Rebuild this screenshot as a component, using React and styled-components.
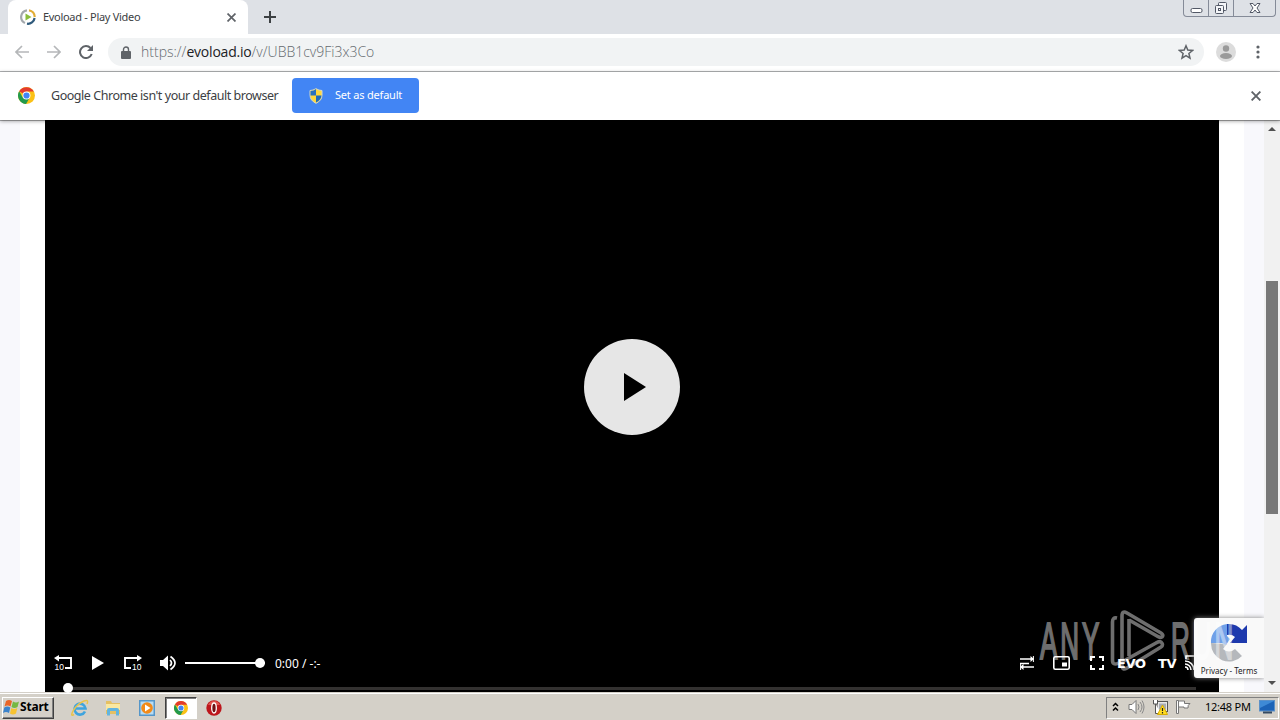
import styled, { createGlobalStyle } from "styled-components";

export default function App() {
  return (
    <Desktop>
      <GlobalStyle />
      <TabStrip>
        <Tab>
          <Favicon />
          <TabTitle>Evoload - Play Video</TabTitle>
          <CrossIcon size={9} />
        </Tab>
        <NewTab>
          <svg width="12" height="12" viewBox="0 0 12 12">
            <path d="M6 0v12M0 6h12" stroke="#3c4043" strokeWidth="2" />
          </svg>
        </NewTab>
        <WindowButtons>
          <WindowButton $width={24}>
            <svg width="13" height="16" viewBox="0 0 13 16">
              <rect x="1" y="8.5" width="11" height="4" rx="1.5" fill="#fff" stroke="#525866" />
            </svg>
          </WindowButton>
          <WindowButton $width={25}>
            <svg width="14" height="16" viewBox="0 0 14 16">
              <rect x="4.5" y="2.5" width="8" height="8" rx="1" fill="#f4f5f8" stroke="#525866" />
              <rect x="1.5" y="5.5" width="8" height="8" rx="1" fill="#f4f5f8" stroke="#525866" />
              <rect x="4.5" y="8.5" width="2" height="2" fill="#fff" stroke="#525866" />
            </svg>
          </WindowButton>
          <WindowButton $width={42}>
            <svg width="12" height="16" viewBox="0 0 12 16">
              <path
                d="M1 3.5h3l2 2.5 2-2.5h3L8 8l3 4.5H8L6 10l-2 2.500H1L4 8z"
                fill="#fff"
                stroke="#525866"
              />
            </svg>
          </WindowButton>
        </WindowButtons>
      </TabStrip>

      <Toolbar>
        <NavButtons>
          <ArrowIcon />
          <ArrowIcon forward />
          <ReloadIcon />
        </NavButtons>
        <AddressBar>
          <svg width="10" height="13" viewBox="0 0 10 13">
            <path d="M2.5 6V3.5a2.5 2.5 0 0 1 5 0V6" fill="none" stroke="#5f6368" strokeWidth="1.4" />
            <rect y="5" width="10" height="8" rx="1" fill="#5f6368" />
          </svg>
          <Url>
            https://<Host>evoload.io</Host>/v/UBB1cv9Fi3x3Co
          </Url>
          <svg width="16" height="16" viewBox="0 0 16 16">
            <path
              d="M8 1.8l1.800 4.300 4.700.4-3.600 3 1.100 4.600L8 11.700l-4 2.400 1.100-4.600-3.600-3 4.700-.4z"
              fill="none"
              stroke="#5f6368"
              strokeWidth="1.5"
            />
          </svg>
        </AddressBar>
        <Avatar>
          <svg width="20" height="20" viewBox="0 0 20 20">
            <circle cx="10" cy="10" r="10" fill="#dcdcdc" />
            <circle cx="10" cy="6.5" r="3.2" fill="#9a9a9a" />
            <ellipse cx="10" cy="14" rx="6" ry="3" fill="#9a9a9a" />
          </svg>
        </Avatar>
        <svg width="4" height="14" viewBox="0 0 4 14" fill="#5f6368">
          <circle cx="2" cy="2" r="1.6" />
          <circle cx="2" cy="7" r="1.6" />
          <circle cx="2" cy="12" r="1.6" />
        </svg>
      </Toolbar>

      <InfoBar>
        <ChromeIcon size={17} />
        <InfoText>Google Chrome isn't your default browser</InfoText>
        <DefaultButton>
          <ShieldIcon />
          <span>Set as default</span>
        </DefaultButton>
        <InfoClose>
          <CrossIcon size={10} />
        </InfoClose>
      </InfoBar>

      <Page>
        <PageBody>
          <Card>
            <Video>
              <Stage>
                <BigPlay>
                  <svg width="22" height="28" viewBox="0 0 22 28">
                    <path d="M0 0l22 14L0 28z" />
                  </svg>
                </BigPlay>
              </Stage>
              <Controls>
                <SkipIcon />
                <PlayIcon />
                <SkipIcon forward />
                <VolumeIcon />
                <VolumeTrack>
                  <VolumeKnob />
                </VolumeTrack>
                <Time>0:00 / -:-</Time>
                <RightControls>
                  <SwapIcon />
                  <svg width="17" height="14" viewBox="0 0 17 14">
                    <rect x=".8" y=".8" width="15.4" height="12.4" rx="1.5" fill="none" stroke="#fff" strokeWidth="1.6" />
                    <rect x="9" y="6.5" width="5" height="4" fill="#fff" />
                  </svg>
                  <svg width="14" height="14" viewBox="0 0 14 14">
                    <path d="M1 5V1h4M9 1h4v4M13 9v4H9M5 13H1V9" fill="none" stroke="#fff" strokeWidth="2" />
                  </svg>
                  <ControlLabel $width={41}>EVO</ControlLabel>
                  <ControlLabel $width={27}>TV</ControlLabel>
                  <svg width="17" height="16" viewBox="0 0 17 16" fill="none" stroke="#fff" strokeWidth="1.6">
                    <path d="M1 4V1h15v13h-5M0 6a9 9 0 0 1 9 9M0 9a6 6 0 0 1 6 6M0 12a3 3 0 0 1 3 3" />
                  </svg>
                </RightControls>
              </Controls>
              <Progress>
                <ProgressKnob />
              </Progress>
            </Video>
          </Card>
        </PageBody>
        <ScrollBar>
          <ScrollArrow />
          <Thumb />
          <ScrollArrow $down />
        </ScrollBar>
        <Recaptcha>
          <RecaptchaLogo />
          <span>Privacy - Terms</span>
        </Recaptcha>
      </Page>

      <Watermark>
        <WatermarkWord $width={70}>ANY</WatermarkWord>
        <svg width="61" height="64" viewBox="0 0 61 64" fill="none" stroke="#fff" strokeWidth="3.6" strokeLinejoin="round">
          <path d="M7 9Q2.500 8 2.500 13v38q0 6 6 3" />
          <path d="M12 50V7q0-6 5-3l34 20q3 2 1 4-2 1-5-1L19 11" />
          <path d="M19 10v37M12 49v7q0 6 5 3l34-21q3-2 0-5-2-1-5 1L10 54" />
        </svg>
        <WatermarkWord $width={62}>RUN</WatermarkWord>
      </Watermark>

      <Taskbar>
        <StartButton>
          <WindowsFlag />
          Start
        </StartButton>
        <QuickLaunch>
          <ExplorerIcon />
          <FolderIcon />
          <MediaIcon />
          <ActiveTask>
            <ChromeIcon size={14} />
          </ActiveTask>
          <OperaIcon />
        </QuickLaunch>
        <Tray>
          <svg width="7" height="10" viewBox="0 0 7 10" fill="none" stroke="#000" strokeWidth="1.5">
            <path d="M1 4l2.500-2.500L6 4M1 8.500L3.500 6 6 8.500" />
          </svg>
          <svg width="17" height="16" viewBox="0 0 17 16">
            <path d="M1 5.500h3l4-4v13l-4-4H1z" fill="#fff" stroke="#777" />
            <path d="M10 5q2 3 0 6M12 3q4 5 0 10M14 1.500q4 6.500 0 13" fill="none" stroke="#888" />
          </svg>
          <svg width="16" height="16" viewBox="0 0 16 16">
            <rect x="5" y="2.5" width="10.5" height="10" fill="#e8e8e8" stroke="#555" />
            <rect x="7" y="4.5" width="7" height="6" fill="#a8acb4" />
            <path d="M1.500 1v4h4V1M3.500 5v9.500H9" fill="#fff" stroke="#555" />
            <path d="M10.500 6l5 9.500h-10z" fill="#ffdc22" stroke="#d8ac00" />
            <path d="M10.500 9v3M10.500 13v1.500" stroke="#222" strokeWidth="1.2" />
          </svg>
          <svg width="16" height="16" viewBox="0 0 16 16">
            <path d="M1.500 1.500h2v13h-2z" fill="#fff" stroke="#777" />
            <path d="M3.500 2h6v2.500H15Q12.500 6 13 9H9V8H3.500z" fill="#fff" stroke="#777" />
          </svg>
          <Clock>12:48 PM</Clock>
          <svg width="16" height="14" viewBox="0 0 16 14">
            <rect x=".5" y=".5" width="15" height="10.5" fill="#1c63b7" stroke="#5c91c8" />
            <path d="M1 1h14L1 8z" fill="#3e8ad6" />
            <path d="M4 12.500h9" stroke="#354a62" strokeWidth="2" />
          </svg>
        </Tray>
      </Taskbar>
    </Desktop>
  );
}

function Favicon() {
  return (
    <svg width="16" height="16" viewBox="0 0 16 16" fill="none" strokeWidth="2.2">
      <path d="M5 14A6.700 6.700 0 0 1 7 1.300" stroke="#a4a9ad" />
      <path d="M9 1.300A6.700 6.700 0 0 1 14.700 8" stroke="#e1ad35" />
      <path d="M14.600 9A6.700 6.700 0 0 1 7 14.700" stroke="#305b7c" />
      <path d="M5.500 4.500l6 3.500-6 3.500z" fill="#8bbd3c" />
    </svg>
  );
}

function CrossIcon({ size }) {
  return (
    <svg width={size} height={size} viewBox="0 0 10 10">
      <path d="M.6.6l8.800 8.800M9.400.6L.6 9.400" stroke="#5f6368" strokeWidth="1.9" />
    </svg>
  );
}

function ReloadIcon() {
  return (
    <svg width="14" height="14" viewBox="0 0 14 14">
      <path d="M11.500 3A6 6 0 1 0 12.700 9" fill="none" stroke="#5f6368" strokeWidth="2" />
      <path d="M14 0v6H8z" fill="#5f6368" />
    </svg>
  );
}

function ArrowIcon({ forward }) {
  return (
    <svg width="14" height="14" viewBox="0 0 14 14">
      <path
        d={forward ? "M0 7h13M7 1l6 6-6 6" : "M14 7H1M7 1L1 7l6 6"}
        fill="none"
        stroke="#b5b7b9"
        strokeWidth="1.7"
      />
    </svg>
  );
}

function ChromeIcon({ size }) {
  return (
    <svg width={size} height={size} viewBox="0 0 18 18">
      <circle cx="9" cy="9" r="9" fill="#fbc116" />
      <path d="M9 9L1.200 4.500A9 9 0 0 1 16.800 4.800H9z" fill="#e33b2e" />
      <path d="M1.200 4.500A9 9 0 0 0 8.500 18l4-7L9 9 5 11z" fill="#229a4c" />
      <circle cx="9" cy="9" r="4.2" fill="#fff" />
      <circle cx="9" cy="9" r="3.3" fill="#4285f4" />
    </svg>
  );
}

function ShieldIcon() {
  return (
    <svg width="14" height="16" viewBox="0 0 14 16">
      <path d="M7 .7Q4 2.500 1 2.500V7q0 5.500 6 8.300 6-2.800 6-8.300V2.500Q10 2.500 7 .7z" fill="#ffd83c" stroke="#d4d9c7" />
      <path d="M7 1v6.500H1.500V3Q5 2.800 7 1z" fill="#2a72be" />
      <path d="M7 7.500h5.500q-.5 4.500-5.500 7z" fill="#216bb8" />
    </svg>
  );
}

function SkipIcon({ forward }) {
  return (
    <svg width="18" height="16" viewBox="0 0 18 16">
      <path
        d={forward ? "M7 13H1V3h14" : "M11 13h6V3H3"}
        fill="none"
        stroke="#fff"
        strokeWidth="1.9"
      />
      <path d={forward ? "M13 0l5 3-5 3.500z" : "M5 0L0 3l5 3.500z"} fill="#fff" />
      <IconNumber x={forward ? 8 : 0.5} y="15">
        10
      </IconNumber>
    </svg>
  );
}

function PlayIcon() {
  return (
    <svg width="12" height="14" viewBox="0 0 12 14">
      <path d="M0 0l12 7-12 7z" fill="#fff" />
    </svg>
  );
}

function VolumeIcon() {
  return (
    <svg width="17" height="16" viewBox="0 0 17 16">
      <path d="M0 5h3l5-4.500v15L3 11H0z" fill="#fff" />
      <path d="M10 5q3 3 0 6M10.500 1.500q9 6.500 0 13" fill="none" stroke="#fff" strokeWidth="1.7" />
    </svg>
  );
}

function SwapIcon() {
  return (
    <svg width="14" height="14" viewBox="0 0 14 14">
      <path d="M0 3h12M2 11h12M0 7.500h9" fill="none" stroke="#fff" strokeWidth="1.4" />
      <path d="M10.500 0L14 3l-3.500 3zM3.500 8L0 11l3.500 3z" fill="#fff" />
      <path d="M.6 7v7M13.400 0v6" stroke="#fff" />
    </svg>
  );
}

function RecaptchaLogo() {
  return (
    <svg width="38" height="40" viewBox="0 0 38 40">
      <path d="M1 20A18 18 0 0 0 32 33l-7-7q-6 5-12 0l4-5z" fill="#b5b8bc" />
      <path d="M1 20A18 18 0 0 1 17 1v12l3 3-4 6-4-2z" fill="#6fa0e8" />
      <path d="M17 1q9-1 15 6l5-5v18H20l5-6q-3-3-8-2z" fill="#1d39ad" />
    </svg>
  );
}

function WindowsFlag() {
  return (
    <svg width="17" height="16" viewBox="0 0 17 16">
      <path d="M3 2q3-2 6 0L7.500 7.500q-3-2-6 0z" fill="#e96527" />
      <path d="M10 2.500q3 2 6 0L14.500 8q-3 2-6 0z" fill="#75b843" />
      <path d="M1.300 8.500q3-2 6 0L6 14q-3-2-6 0z" fill="#3b83cc" />
      <path d="M8.300 9q3 2 6 0L13 14.500q-3 2-6 0z" fill="#f7c331" />
    </svg>
  );
}

function ExplorerIcon() {
  return (
    <svg width="18" height="18" viewBox="0 0 18 18" fill="none">
      <path d="M14 12.500A5.500 5.500 0 1 1 14.500 9.500H5" stroke="#3fa4de" strokeWidth="2.6" />
      <path d="M3 15.500Q-1 18 2 12 6 5 13 2q5-2 3 3" stroke="#e9c34b" strokeWidth="1.5" />
    </svg>
  );
}

function FolderIcon() {
  return (
    <svg width="16" height="16" viewBox="0 0 16 16">
      <path d="M1 1h5l1 2h8v11H1z" fill="#e5c063" />
      <path d="M1 4h14v6H1z" fill="#fae8a0" />
      <path d="M2 15.500V10q0-2 2-2h8q2 0 2 2v5.500h-3V11H5v4.500z" fill="#62b4df" />
    </svg>
  );
}

function MediaIcon() {
  return (
    <svg width="16" height="16" viewBox="0 0 16 16">
      <rect x=".75" y=".75" width="14.5" height="14.5" fill="#b7dcf4" stroke="#5596c9" strokeWidth="1.5" />
      <circle cx="8" cy="8" r="5.8" fill="#f28a18" />
      <path d="M6 4.500l5.500 3.500L6 11.500z" fill="#fff" />
    </svg>
  );
}

function OperaIcon() {
  return (
    <svg width="16" height="16" viewBox="0 0 16 16">
      <circle cx="8" cy="8" r="7.7" fill="#bd161c" />
      <path d="M2 5a6.500 6.500 0 0 1 12 0" fill="#e0524d" />
      <ellipse cx="8" cy="8" rx="2.3" ry="5" fill="#701013" stroke="#fff" strokeWidth="1.3" />
    </svg>
  );
}

const GlobalStyle = createGlobalStyle`
  * {
    box-sizing: border-box;
  }
  body {
    margin: 0;
    overflow: hidden;
    font-family: "Noto Sans", "DejaVu Sans", sans-serif;
  }
  svg {
    display: block;
    flex: none;
  }
`;

const Desktop = styled.div`
  position: relative;
  width: 1280px;
  height: 720px;
  display: flex;
  flex-direction: column;
  overflow: hidden;
  background: #ffffff;
  white-space: nowrap;
`;

const TabStrip = styled.div`
  height: 34px;
  flex: none;
  display: flex;
  padding-left: 8px;
  background: #dee1e6;
`;

const Tab = styled.div`
  width: 240px;
  height: 34px;
  display: flex;
  align-items: center;
  padding: 0 12px;
  border-radius: 8px 8px 0 0;
  background: #ffffff;
`;

const TabTitle = styled.span`
  flex: 1;
  margin-left: 7px;
  padding-bottom: 2px;
  font-size: 11px;
  letter-spacing: -0.3px;
  color: #3c4043;
`;

const NewTab = styled.div`
  padding: 11px 0 0 16px;
`;

const WindowButtons = styled.div`
  height: 17px;
  display: flex;
  margin: 0 4px 0 auto;
  border: 1px solid #858b98;
  border-top: none;
  border-radius: 0 0 4px 4px;
`;

const WindowButton = styled.div`
  width: ${({ $width }) => $width}px;
  display: flex;
  justify-content: center;
  & + & {
    border-left: 1px solid #858b98;
  }
`;

const Toolbar = styled.div`
  height: 38px;
  flex: none;
  display: flex;
  align-items: center;
  padding: 0 20px 1px 15px;
  border-bottom: 1px solid #b2b4b6;
`;

const NavButtons = styled.div`
  width: 93px;
  display: flex;
  gap: 18px;
`;

const AddressBar = styled.div`
  width: 1096px;
  height: 28px;
  display: flex;
  align-items: center;
  padding: 0 10px 0 13px;
  border-radius: 14px;
  background: #f1f3f4;
`;

const Url = styled.span`
  flex: 1;
  margin-left: 10px;
  padding-bottom: 1px;
  font-family: "Open Sans", sans-serif;
  font-size: 14px;
  font-weight: 300;
  color: #64696e;
`;

const Host = styled.span`
  letter-spacing: -0.2px;
  color: #202124;
  font-weight: 400;
`;

const Avatar = styled.div`
  margin: 0 20px 0 12px;
`;

const InfoBar = styled.div`
  position: relative;
  z-index: 1;
  height: 48px;
  flex: none;
  display: flex;
  align-items: center;
  padding: 0 19px 1px 18px;
  box-shadow: 0 1px 0 rgba(0, 0, 0, 0.3), 0 1px 4px rgba(0, 0, 0, 0.4);
  background: #ffffff;
`;

const InfoText = styled.span`
  width: 241px;
  margin-left: 16px;
  padding-bottom: 1px;
  font-size: 12.5px;
  letter-spacing: -0.46px;
  color: #3c4043;
`;

const DefaultButton = styled.div`
  width: 127px;
  height: 35px;
  display: flex;
  align-items: center;
  gap: 12px;
  padding-left: 17px;
  border-radius: 4px;
  font-size: 11px;
  letter-spacing: -0.2px;
  color: #ffffff;
  background: #4285f4;

  span {
    padding-bottom: 2px;
  }
`;

const InfoClose = styled.div`
  margin-left: auto;
`;

const Page = styled.div`
  position: relative;
  height: 572px;
  flex: none;
  display: flex;
`;

const PageBody = styled.div`
  width: 1264px;
  padding: 0 20px;
  background: #f8f8fc;
`;

const Card = styled.div`
  height: 100%;
  padding: 0 25px;
  background: #ffffff;
`;

const Video = styled.div`
  height: 572px;
  display: flex;
  flex-direction: column;
  background: #000000;
`;

const Stage = styled.div`
  height: 534px;
  display: flex;
  justify-content: center;
  align-items: center;
`;

const BigPlay = styled.div`
  width: 96px;
  height: 96px;
  display: flex;
  align-items: center;
  padding-left: 40px;
  border-radius: 50%;
  background: #e6e6e6;
`;

const Controls = styled.div`
  height: 18px;
  display: flex;
  align-items: center;
  padding: 0 17px 0 9px;
  color: #ffffff;

  > svg:nth-child(2) {
    margin: 0 20px 0 20px;
  }
  > svg:nth-child(4) {
    margin: 0 8px 0 18px;
  }
`;

const IconNumber = styled.text`
  font-family: "Liberation Sans", sans-serif;
  font-size: 8.5px;
  fill: #ffffff;
`;

const VolumeTrack = styled.div`
  width: 80px;
  height: 2px;
  display: flex;
  align-items: center;
  justify-content: flex-end;
  background: #ffffff;
`;

const VolumeKnob = styled.div`
  width: 10px;
  height: 10px;
  flex: none;
  border-radius: 50%;
  background: #ffffff;
`;

const Time = styled.span`
  margin-left: 10px;
  font-size: 12px;
`;

const RightControls = styled.div`
  display: flex;
  align-items: center;
  margin-left: auto;

  > svg:nth-child(2) {
    margin: 0 20px 0 19px;
  }
`;

const ControlLabel = styled.span`
  width: ${({ $width }) => $width}px;
  font-family: "DejaVu Sans", sans-serif;
  font-size: 13px;
  font-weight: 700;
  letter-spacing: -0.4px;
  &:nth-child(4) {
    margin-left: 13px;
  }
`;

const Progress = styled.div`
  width: 1128px;
  height: 3px;
  display: flex;
  align-items: center;
  margin: 15px 0 0 23px;
  background: #333130;
`;

const ProgressKnob = styled.div`
  width: 10px;
  height: 10px;
  margin: -1px 0 0 -5px;
  border-radius: 50%;
  background: #ffffff;
`;

const ScrollBar = styled.div`
  width: 16px;
  display: flex;
  flex-direction: column;
  align-items: center;
  justify-content: space-between;
  padding: 7px 0;
  background: #f1f1f1;
`;

const ScrollArrow = styled.div`
  width: 0;
  height: 0;
  border: 4px solid transparent;
  border-top: ${({ $down }) => ($down ? "4px solid #505050" : "none")};
  border-bottom: ${({ $down }) => ($down ? "none" : "4px solid #505050")};
`;

const Thumb = styled.div`
  width: 12px;
  height: 233px;
  margin-bottom: 17px;
  background: #787878;
`;

const Recaptcha = styled.div`
  position: absolute;
  top: 498px;
  right: 16px;
  width: 70px;
  height: 60px;
  display: flex;
  flex-direction: column;
  align-items: center;
  padding-top: 5px;
  border-radius: 3px 0 0 3px;
  box-shadow: 0 0 5px #808080;
  clip-path: inset(-6px 0 -6px -6px);
  font-size: 8px;
  line-height: 15px;
  color: #202020;
  background: #f9f9f9;
`;

const Watermark = styled.div`
  position: absolute;
  z-index: 2;
  top: 609px;
  left: 1040px;
  width: 194px;
  height: 64px;
  display: flex;
  opacity: 0.43;
`;

const WatermarkWord = styled.span`
  width: ${({ $width }) => $width}px;
  height: 64px;
  flex: none;
  font-family: "Liberation Sans", sans-serif;
  font-size: 52px;
  line-height: 64px;
  letter-spacing: 6px;
  color: #ffffff;
  -webkit-text-stroke: 2px #ffffff;
  transform: scaleX(0.5);
  transform-origin: left;
`;

const Taskbar = styled.div`
  height: 28px;
  flex: none;
  display: flex;
  align-items: center;
  padding: 2px 1px 0 2px;
  border-top: 1px solid #d4d0c8;
  box-shadow: inset 0 1px #ffffff;
  background: #d4d0c8;
`;

const StartButton = styled.div`
  width: 52px;
  height: 22px;
  display: flex;
  align-items: center;
  border: 1px solid;
  border-color: #ffffff #404040 #404040 #ffffff;
  box-shadow: inset -1px -1px #808080;
  font-size: 12px;
  font-weight: 700;
  letter-spacing: -0.2px;
  line-height: 16px;
  padding-bottom: 2px;
  color: #000000;
`;

const QuickLaunch = styled.div`
  display: flex;
  align-items: center;
  margin-left: 17px;

  > svg:nth-child(2) {
    margin: 0 18px 0 16px;
  }
`;

const ActiveTask = styled.div`
  width: 32px;
  height: 22px;
  display: flex;
  align-items: center;
  justify-content: center;
  margin: 0 9px 0 10px;
  border: 1px solid;
  border-color: #404040 #ffffff #ffffff #404040;
  box-shadow: inset 1px 1px #808080;
  background: #ffffff;
`;

const Tray = styled.div`
  width: 173px;
  height: 22px;
  display: flex;
  align-items: center;
  gap: 7px;
  margin-left: auto;
  padding: 0 0 2px 5px;
  border: 1px solid;
  border-color: #808080 #ffffff #ffffff #808080;

  > svg:first-child {
    margin-right: 2px;
  }
`;

const Clock = styled.span`
  width: 47px;
  margin: 0 0 0 7px;
  font-size: 11px;
  letter-spacing: -0.25px;
  color: #000000;
`;
